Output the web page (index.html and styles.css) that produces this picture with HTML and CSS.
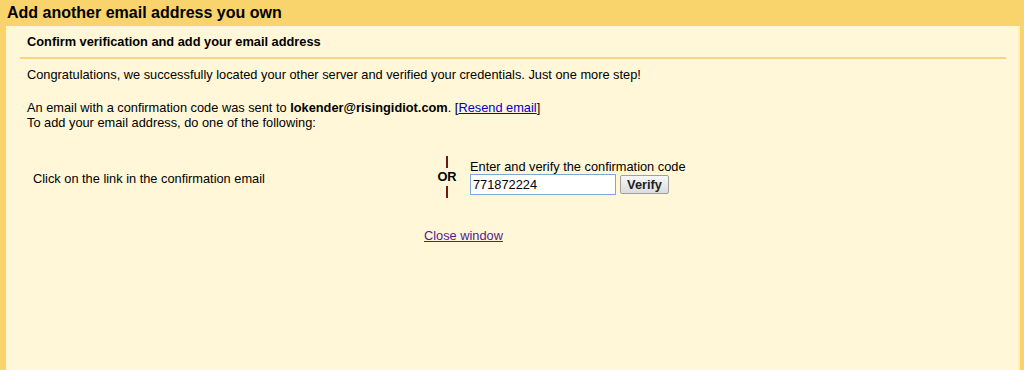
FILE: index.html
```html
<!DOCTYPE html>
<html lang="en">
<head>
    <meta charset="UTF-8">
    <meta name="viewport" content="width=device-width, initial-scale=1.0">
    <title>Add another email address you own</title>
    <link rel="stylesheet" href="styles.css">
</head>
<body>

    <div class="header">Add another email address you own</div>

    <div class="panel">
        <div class="section-title">Confirm verification and add your email address</div>

        <p class="congrats">Congratulations, we successfully located your other server and verified your credentials. Just one more step!</p>

        <p class="sent">
            An email with a confirmation code was sent to <b>lokender@risingidiot.com</b>. [<a href="#" class="link">Resend email</a>]<br>
            To add your email address, do one of the following:
        </p>

        <div class="choices">
            <div class="choice-left">Click on the link in the confirmation email</div>
            <div class="or">
                <span class="bar"></span>
                <span class="or-text">OR</span>
                <span class="bar"></span>
            </div>
            <div class="choice-right">
                <div class="code-label">Enter and verify the confirmation code</div>
                <div class="code-row">
                    <input type="text" class="code-input" value="771872224">
                    <button class="verify">Verify</button>
                </div>
            </div>
        </div>

        <div class="close"><a href="#" class="visited">Close window</a></div>
    </div>

</body>
</html>
```

FILE: styles.css
```css
*{
    margin: 0;
    padding: 0;
    box-sizing: border-box;
}
body{
    font-family: "Liberation Sans", Arial, sans-serif;
    font-size: 12.8px;
    line-height: 15px;
    color: #000;
    background-color: #f9d36b;
    height: 370px;
    overflow: hidden;
}
.header{
    height: 26px;
    padding: 3px 0 0 7px;
    font-size: 16px;
    line-height: 19px;
    font-weight: bold;
    background-color: #f9d36b;
}
.panel{
    margin: 0 4px 0 6px;
    height: 344px;
    padding: 0 12px 0 14px;
    background-color: #fff7d7;
    border-right: 2px solid #fcefc0;
}
.section-title{
    padding: 8px 0 8px 7px;
    font-weight: bold;
    border-bottom: 2px solid #f3d77e;
}
.congrats{
    padding: 8px 0 0 7px;
}
.sent{
    padding: 18px 0 0 7px;
}
.link{
    color: #0000cc;
}
.visited{
    color: #551a8b;
}
.choices{
    display: flex;
    align-items: center;
    margin-top: 26px;
}
.choice-left{
    width: 404px;
    padding-left: 13px;
    padding-top: 2px;
}
.or{
    width: 46px;
    display: flex;
    flex-direction: column;
    align-items: center;
    font-weight: bold;
}
.bar{
    display: block;
    width: 2px;
    height: 12px;
    background-color: #6b1a1a;
}
.or-text{
    padding: 2px 0 3px;
    line-height: 13px;
}
.code-row{
    display: flex;
    align-items: center;
    gap: 4px;
}
.code-input{
    width: 146px;
    height: 21px;
    padding: 1px 2px;
    font-family: "Liberation Sans", Arial, sans-serif;
    font-size: 12.8px;
    border: 1px solid #7ea6d8;
    background-color: #fff;
    outline: none;
}
.verify{
    width: 49px;
    height: 19px;
    font-family: "Liberation Sans", Arial, sans-serif;
    font-size: 12.8px;
    font-weight: bold;
    color: #222;
    border: 1px solid #a0a0a0;
    border-radius: 2px;
    background: linear-gradient(#f8f8f8, #dcdcdc);
}
.close{
    padding: 30px 0 0 404px;
}
```
